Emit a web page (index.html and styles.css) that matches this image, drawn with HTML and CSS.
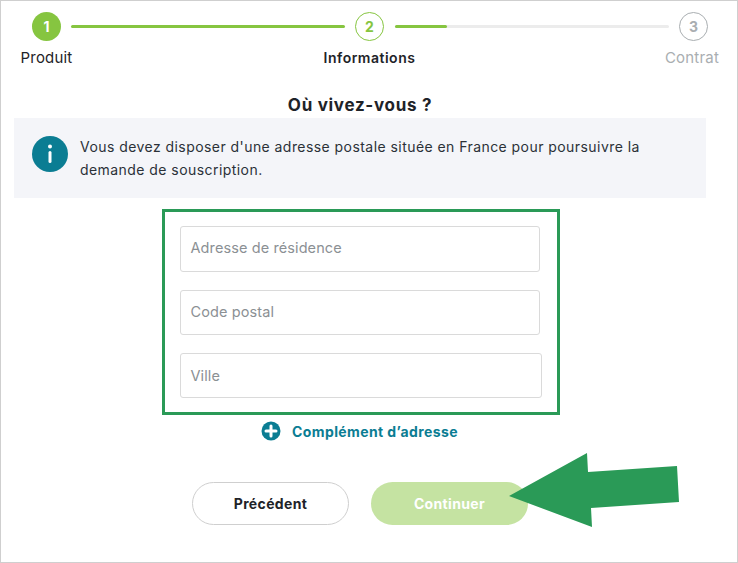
FILE: index.html
```html
<!DOCTYPE html>
<html lang="fr">
<head>
<meta charset="utf-8">
<title>Où vivez-vous ?</title>
<link rel="stylesheet" href="styles.css">
</head>
<body>
<main class="frame">
  <nav class="stepper">
    <span class="dot dot-done">1</span>
    <span class="line line-full"></span>
    <span class="dot dot-current">2</span>
    <span class="line line-part"><span class="line-fill"></span></span>
    <span class="dot dot-todo">3</span>
    <span class="label">Produit</span>
    <span></span>
    <span class="label label-current">Informations</span>
    <span></span>
    <span class="label label-todo">Contrat</span>
  </nav>

  <h1 class="title">Où vivez-vous ?</h1>

  <section class="notice">
    <svg class="notice-icon" width="36" height="36" viewBox="0 0 36 36" aria-hidden="true">
      <circle cx="18" cy="18" r="18" fill="#0b7d93"/>
      <circle cx="18" cy="10.5" r="2" fill="#fff"/>
      <rect x="16.5" y="15" width="3" height="12" rx="1.5" fill="#fff"/>
    </svg>
    <p class="notice-text">Vous devez disposer d'une adresse postale située en France pour poursuivre la demande de souscription.</p>
  </section>

  <section class="address">
    <div class="field">Adresse de résidence</div>
    <div class="field field-short">Code postal</div>
    <div class="field field-wide">Ville</div>
  </section>

  <div class="more">
    <svg width="20" height="20" viewBox="0 0 20 20" aria-hidden="true">
      <circle cx="10" cy="10" r="9.5" fill="#0b7d93"/>
      <path d="M10 5v10M5 10h10" stroke="#fff" stroke-width="3" stroke-linecap="round"/>
    </svg>
    <span class="more-text">Complément d’adresse</span>
  </div>

  <div class="actions">
    <button class="btn btn-back" type="button">Précédent</button>
    <button class="btn btn-next" type="button">Continuer</button>
    <svg class="arrow" width="172" height="76" viewBox="0 0 172 76" aria-hidden="true">
      <polygon points="1,44 79,1 80,20 169,14 171,50 83,56 84,75" fill="#2a9a57"/>
    </svg>
  </div>
</main>
</body>
</html>
```
FILE: styles.css
```css
* { box-sizing: border-box; }

html, body { margin: 0; padding: 0; background: #fff; }

body {
  font-family: Inter, "Liberation Sans", sans-serif;
  color: #1e2328;
}

.frame {
  width: 738px;
  height: 563px;
  border: 1px solid #cfcfcf;
  overflow: hidden;
  display: flex;
  flex-direction: column;
  padding: 11px 0 0 13px;
}

.stepper {
  display: grid;
  grid-template-columns: 29px 274px 29px 275px 29px;
  grid-template-rows: 29px auto;
  column-gap: 10px;
  row-gap: 7px;
  align-items: center;
  margin-left: 18px;
  width: 676px;
}

.dot {
  width: 29px;
  height: 29px;
  border-radius: 50%;
  display: flex;
  align-items: center;
  justify-content: center;
  font-size: 14px;
  font-weight: 700;
}
.dot-done { background: #86c540; color: #fff; }
.dot-current { border: 1px solid #86c540; color: #86c540; }
.dot-todo { border: 1px solid #a9aeb1; color: #a9aeb1; }

.line {
  height: 3px;
  border-radius: 2px;
  background: #ececec;
  display: block;
}
.line-full { background: #86c540; }
.line-part { width: 274px; justify-self: end; }
.line-fill {
  display: block;
  width: 52px;
  height: 100%;
  background: #86c540;
  border-radius: 2px;
}

.label {
  justify-self: center;
  white-space: nowrap;
  font-size: 15px;
  line-height: 20px;
  letter-spacing: 0.2px;
}
.label-current { font-size: 14px; font-weight: 600; letter-spacing: 0.5px; }
.label-todo { color: #a9aeb1; position: relative; left: -1.5px; }

.title {
  margin: 27px 0 0;
  width: 692px;
  text-align: center;
  font-size: 17px;
  font-weight: 700;
  line-height: 20px;
  letter-spacing: 0.7px;
}

.notice {
  width: 692px;
  height: 80px;
  margin-top: 3px;
  padding: 18px 60px 0 18px;
  background: #f4f5f9;
  display: flex;
  align-items: flex-start;
  gap: 12px;
}
.notice-icon { flex: none; }
.notice-text {
  margin: -1px 0 0;
  font-size: 14px;
  line-height: 23px;
  letter-spacing: 0.44px;
  color: #2b3138;
}

.address {
  width: 398px;
  height: 206px;
  margin: 11px 0 0 148px;
  border: 3px solid #2a9a57;
  padding: 14px 15px 0;
  display: flex;
  flex-direction: column;
  gap: 18px;
}

.field {
  width: 360px;
  height: 46px;
  border: 1px solid #dadada;
  border-radius: 3px;
  padding: 0 10px 3px 9.5px;
  display: flex;
  align-items: center;
  font-size: 14.5px;
  letter-spacing: 0.1px;
  color: #8b9094;
}
.field-short { height: 45px; }
.field-wide { height: 45px; width: 362px; padding-bottom: 1px; }

.more {
  display: flex;
  align-items: center;
  gap: 11px;
  margin: 6px 0 0 247px;
  height: 20px;
}
.more-text {
  font-size: 14px;
  font-weight: 700;
  letter-spacing: 0.4px;
  color: #0b7d93;
}

.actions {
  position: relative;
  display: flex;
  gap: 22px;
  margin: 41px 0 0 178px;
}

.btn {
  width: 157px;
  height: 43px;
  border-radius: 22px;
  font-family: inherit;
  font-size: 14px;
  font-weight: 700;
  letter-spacing: 0.35px;
  padding: 0;
}
.btn-back { background: #fff; border: 1px solid #cfcfcf; color: #1e2328; }
.btn-next { background: #c5e3a2; border: 0; color: #fff; }

.arrow {
  position: absolute;
  left: 316px;
  top: -30px;
}
```
